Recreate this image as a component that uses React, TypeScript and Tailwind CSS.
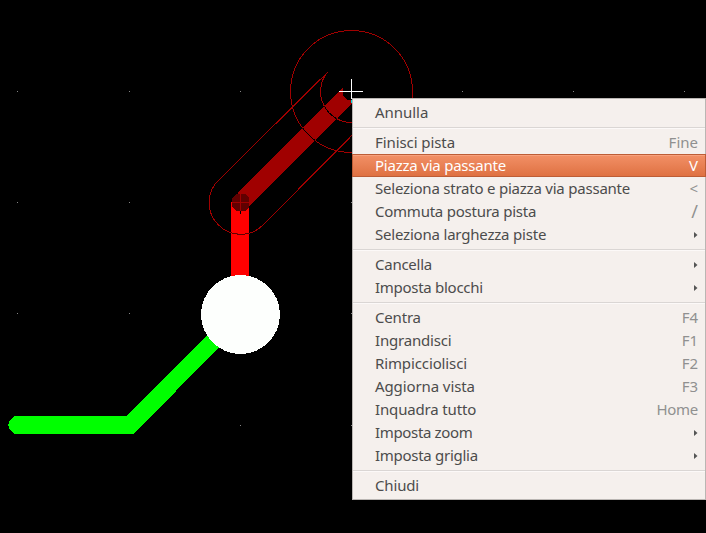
type Item = { label: string; tracking: string; accel?: string; submenu?: boolean; active?: boolean };

const groups: Item[][] = [
  [{ label: "Annulla", tracking: "tracking-[-0.04px]" }],
  [
    { label: "Finisci pista", tracking: "tracking-[-0.08px]", accel: "Fine" },
    { label: "Piazza via passante", tracking: "tracking-[-0.22px]", accel: "V", active: true },
    { label: "Seleziona strato e piazza via passante", tracking: "tracking-[-0.22px]", accel: "<" },
    { label: "Commuta postura pista", tracking: "tracking-[-0.24px]", accel: "/" },
    { label: "Seleziona larghezza piste", tracking: "tracking-[-0.2px]", submenu: true },
  ],
  [
    { label: "Cancella", tracking: "tracking-[-0.25px]", submenu: true },
    { label: "Imposta blocchi", tracking: "tracking-[-0.28px]", submenu: true },
  ],
  [
    { label: "Centra", tracking: "tracking-[-0.18px]", accel: "F4" },
    { label: "Ingrandisci", tracking: "tracking-[-0.2px]", accel: "F1" },
    { label: "Rimpicciolisci", tracking: "tracking-[-0.12px]", accel: "F2" },
    { label: "Aggiorna vista", tracking: "tracking-[-0.1px]", accel: "F3" },
    { label: "Inquadra tutto", tracking: "tracking-[-0.15px]", accel: "Home" },
    { label: "Imposta zoom", tracking: "tracking-[-0.34px]", submenu: true },
    { label: "Imposta griglia", tracking: "tracking-[-0.28px]", submenu: true },
  ],
  [{ label: "Chiudi", tracking: "tracking-[-0.15px]" }],
];

const gridX = [17, 129, 240, 351, 462, 573, 684];
const gridY = [91, 202, 313, 425];

function ClearanceOutline() {
  return (
    <>
      <circle cx="351.5" cy="91.5" r="61" />
      <path d="M327.8 72 L219 179.8 A31.3 31.3 0 0 0 218 224.5 A31.3 31.3 0 0 0 263 225 L352 135.3" />
      <path d="M327.5 72 A31 31 0 0 0 352 122.5" />
    </>
  );
}

function Board() {
  return (
    <svg width="706" height="533" viewBox="0 0 706 533" shapeRendering="crispEdges" className="block">
      <defs>
        <clipPath id="routing"><path d="M238 193 L342.5 88 L343 96 L347 100 H352 V103 L249 207 Z" /></clipPath>
        <clipPath id="routed"><rect x="231" y="212" width="18" height="64" /></clipPath>
      </defs>
      <rect width="706" height="533" fill="#000" />
      {gridY.flatMap((y) => gridX.map((x) => <rect key={`${x}-${y}`} x={x} y={y} width="1" height="1" fill="#848484" />))}
      <path d="M15 416 H127 L208 334 L219 347 L134 434 H14 L10 430 L8 425 L10 420 Z" fill="#00ff00" />
      <rect x="231" y="202" width="18" height="76" fill="#ff0000" />
      <g fill="none" stroke="#a00000" strokeWidth="1"><ClearanceOutline /></g>
      <path d="M238 193 L342.5 88 L343 96 L347 100 H352 V103 L249 207 Z" fill="#a00000" />
      <g fill="none" stroke="#000" strokeWidth="1" clipPath="url(#routing)"><ClearanceOutline /></g>
      <g fill="none" stroke="#600000" strokeWidth="1" clipPath="url(#routed)"><ClearanceOutline /></g>
      <path d="M236 194 H246 L249 198 V207 L245 211 H236 L232 207 V198 Z" fill="#600000" />
      <rect x="232" y="202" width="17" height="1" fill="#a00000" />
      <rect x="240" y="193" width="1" height="18" fill="#a00000" />
      <rect x="240" y="211" width="1" height="3" fill="#000" />
      <circle cx="240.5" cy="314.5" r="39.5" fill="#fdfffd" />
      <rect x="339" y="91" width="24" height="1" fill="#fff" />
      <rect x="351" y="79" width="1" height="20" fill="#fff" />
      <rect x="351" y="100" width="1" height="3" fill="#00d8d8" />
    </svg>
  );
}

function MenuRow({ item }: { item: Item }) {
  const state = item.active
    ? "border-[#bd5d36] bg-linear-to-b from-[#f29066] to-[#df7142] text-white shadow-[inset_0_1px_0_#f7a17d]"
    : "border-transparent text-[#4c4c4c]";
  return (
    <div className={`-mx-px flex h-[23px] items-center justify-between border pr-[7px] pl-[22px] ${state}`}>
      <span className={`whitespace-pre ${item.tracking}`}>{item.label}</span>
      {item.accel && (
        <span className={`${item.active ? "text-white" : "text-[#909090]"} ${item.accel === "Home" ? "tracking-[-0.3px]" : ""} ${item.accel === "/" ? "text-[18px]" : ""}`}>
          {item.accel}
        </span>
      )}
      {item.submenu && (
        <svg width="4" height="6" viewBox="0 0 4 6"><path d="M0 0 L3.5 3 L0 6 Z" fill="#555" /></svg>
      )}
    </div>
  );
}

export default function App() {
  return (
    <div className="relative h-[533px] w-[706px] overflow-hidden bg-black">
      <Board />
      <div className="absolute top-[98px] left-[352px] flex h-[402px] w-[354px] flex-col border border-[#bab6b3] bg-[#f5f0ed] py-[2px] font-['Noto_Sans','Open_Sans',sans-serif] text-[15px] leading-[21px]">
        {groups.map((items, i) => (
          <div key={i}>
            {i > 0 && <div className="flex h-[7px] flex-col pt-[3px]"><div className="h-px bg-[#dad6d4]" /><div className="h-px bg-[#fcf9f8]" /></div>}
            {items.map((item) => <MenuRow key={item.label} item={item} />)}
          </div>
        ))}
      </div>
    </div>
  );
}
